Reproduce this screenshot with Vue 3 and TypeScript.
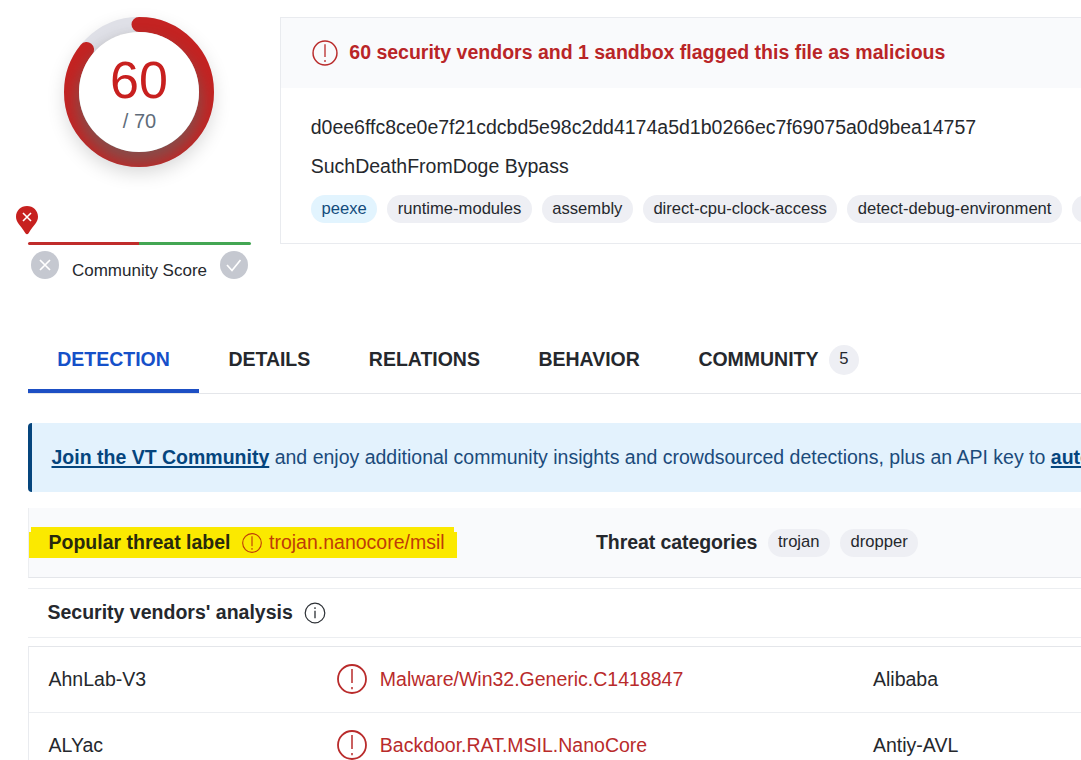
<script setup lang="ts">
interface Finding {
  vendor: string
  result: string
  other: string
}

const fileTags: string[] = [
  'peexe',
  'runtime-modules',
  'assembly',
  'direct-cpu-clock-access',
  'detect-debug-environment',
]

const tabs: string[] = ['DETECTION', 'DETAILS', 'RELATIONS', 'BEHAVIOR', 'COMMUNITY']

const findings: Finding[] = [
  { vendor: 'AhnLab-V3', result: 'Malware/Win32.Generic.C1418847', other: 'Alibaba' },
  { vendor: 'ALYac', result: 'Backdoor.RAT.MSIL.NanoCore', other: 'Antiy-AVL' },
]

const detections = 60
const engines = 70
const circumference = 2 * Math.PI * 67.5
const arc = `${(circumference * detections) / engines} ${circumference}`
</script>

<template>
  <div class="page">
    <div class="summary">
      <aside class="score">
        <svg class="gauge" width="200" height="200" viewBox="0 0 200 200">
          <defs>
            <filter id="outer" x="-30%" y="-30%" width="160%" height="160%">
              <feGaussianBlur stdDeviation="10" />
            </filter>
            <filter id="inner" x="-30%" y="-30%" width="160%" height="160%">
              <feGaussianBlur stdDeviation="8" />
            </filter>
            <clipPath id="disc"><circle cx="100" cy="92" r="75" /></clipPath>
          </defs>
          <circle cx="100" cy="99" r="73" fill="#000" opacity="0.17" filter="url(#outer)" />
          <circle cx="100" cy="92" r="67.5" fill="none" stroke="#dfe0e7" stroke-width="15" />
          <circle
            cx="100"
            cy="92"
            r="67.5"
            fill="none"
            stroke="#c42322"
            stroke-width="15"
            stroke-linecap="round"
            :stroke-dasharray="arc"
            transform="rotate(-90 100 92)"
          />
          <g clip-path="url(#disc)">
            <circle cx="100" cy="102" r="62" fill="#66625f" opacity="0.66" filter="url(#inner)" />
          </g>
          <circle cx="100" cy="92" r="60" fill="#fff" />
          <text class="count" x="100" y="98" text-anchor="middle">{{ detections }}</text>
          <text class="total" x="100.5" y="128" text-anchor="middle">/ {{ engines }}</text>
        </svg>
        <div class="scale">
          <svg class="pin" width="24" height="30" viewBox="0 0 24 30">
            <path d="M12 1C5.800 1 1 5.700 1 11.700C1 17.500 5.200 19.400 10.400 28.200Q12 30.200 13.600 28.200C18.800 19.400 23 17.500 23 11.700C23 5.700 18.200 1 12 1Z" fill="#c7211f" />
            <path d="M8 8l8 8M16 8l-8 8" stroke="#fff" stroke-width="1.600" />
          </svg>
          <div class="bar"></div>
        </div>
        <div class="votes">
          <svg width="28" height="28" viewBox="0 0 28 28">
            <circle cx="14" cy="14" r="14" fill="#c5c8d0" />
            <path d="M9 9l10 10M19 9l-10 10" stroke="#fff" stroke-width="1.700" />
          </svg>
          <span class="label">Community Score</span>
          <svg width="28" height="28" viewBox="0 0 28 28">
            <circle cx="14" cy="14" r="14" fill="#c5c8d0" />
            <path d="M7 14l5 5.500L20.500 9" fill="none" stroke="#fff" stroke-width="1.700" />
          </svg>
        </div>
      </aside>

      <section class="file">
        <header class="verdict">
          <svg width="26" height="26" viewBox="0 0 30 30">
            <circle cx="15" cy="15" r="13.800" fill="none" stroke="#b92b2b" stroke-width="1.700" />
            <path d="M15 5v14.500M15 23v2.300" stroke="#b92b2b" stroke-width="1.500" />
          </svg>
          <span>60 security vendors and 1 sandbox flagged this file as malicious</span>
        </header>
        <div class="hash">d0ee6ffc8ce0e7f21cdcbd5e98c2dd4174a5d1b0266ec7f69075a0d9bea14757</div>
        <div class="name">SuchDeathFromDoge Bypass</div>
        <div class="tags">
          <span v-for="(tag, i) in fileTags" :key="tag" class="tag" :class="{ blue: i === 0 }">{{ tag }}</span>
          <span class="tag more"></span>
        </div>
      </section>
    </div>

    <nav class="tabs">
      <a v-for="(tab, i) in tabs" :key="tab" class="tab" :class="{ active: i === 0 }">
        <span>{{ tab }}</span>
        <span v-if="i === 4" class="badge">5</span>
      </a>
    </nav>

    <div class="join">
      <span><b>Join the VT Community</b> and enjoy additional community insights and crowdsourced detections, plus an API key to <b>automate checks.</b></span>
    </div>

    <section class="threat">
      <div class="highlight">
        <b class="popular">Popular threat label</b>
        <svg width="20" height="20" viewBox="0 0 30 30">
          <circle cx="15" cy="15" r="14" fill="none" stroke="#bf3c08" stroke-width="1.700" />
          <path d="M15 5v15M15 22.500v2.500" stroke="#bf3c08" stroke-width="1.700" />
        </svg>
        <span class="family">trojan.nanocore/msil</span>
      </div>
      <div class="categories">
        <b class="cat-label">Threat categories</b>
        <span class="tag">trojan</span>
        <span class="tag">dropper</span>
      </div>
    </section>

    <div class="analysis">
      <b class="analysis-title">Security vendors' analysis</b>
      <svg width="22" height="22" viewBox="0 0 22 22">
        <circle cx="11" cy="11" r="9.800" fill="none" stroke="#2c3035" stroke-width="1.200" />
        <path d="M11 5.300v1.600M11 8.700v7.500" stroke="#2c3035" stroke-width="1.300" />
      </svg>
    </div>

    <div class="results">
      <div v-for="f in findings" :key="f.vendor" class="row">
        <span class="cell">{{ f.vendor }}</span>
        <span class="result">
          <svg width="30" height="30" viewBox="0 0 30 30">
            <circle cx="15" cy="15" r="14" fill="none" stroke="#b92b2b" stroke-width="1.800" />
            <path d="M15 5v14M15 23v2.200" stroke="#b92b2b" stroke-width="1.500" />
          </svg>
          <span>{{ f.result }}</span>
        </span>
        <span class="cell">{{ f.other }}</span>
      </div>
    </div>
  </div>
</template>

<style>
body {
  margin: 0;
  background: #fff;
  overflow: hidden;
}
</style>

<style scoped>
.page {
  box-sizing: border-box;
  width: 1081px;
  height: 760px;
  overflow: hidden;
  background: #fff;
  color: #25282d;
  font-family: "Liberation Sans", Arial, sans-serif;
  font-size: 19.5px;
  line-height: 24px;
  white-space: nowrap;
}
svg {
  display: block;
  flex: none;
}
.summary {
  display: flex;
  height: 325px;
}
.score {
  box-sizing: border-box;
  width: 280px;
  flex: none;
}
.gauge {
  margin-left: 39px;
}
.count {
  fill: #c8201f;
  font-size: 52px;
}
.total {
  fill: #606c7a;
  font-size: 20px;
}
.scale {
  padding: 5px 29px 0 15px;
}
.bar {
  width: 223px;
  height: 3px;
  margin: 7px 0 0 13px;
  border-radius: 2px;
  background: linear-gradient(90deg, #c02c2b 50%, #43a653 50%);
}
.votes {
  display: flex;
  align-items: flex-start;
  justify-content: space-between;
  width: 217px;
  margin: 6px 0 0 31px;
}
.label {
  margin-top: 8px;
  font-size: 17px;
}
.file {
  box-sizing: border-box;
  width: 900px;
  height: 227px;
  flex: none;
  margin-top: 17px;
  border: 1px solid #e9ebef;
}
.verdict {
  box-sizing: border-box;
  display: flex;
  align-items: flex-start;
  gap: 11.300px;
  height: 70px;
  padding: 22px 0 0 31px;
  background: #f9fafc;
  color: #b92527;
  font-weight: bold;
}
.hash {
  margin: 27px 0 0 29.700px;
}
.name {
  margin: 15px 0 0 29.700px;
}
.tags {
  display: flex;
  gap: 10px;
  margin: 17px 0 0 30px;
}
.tag {
  box-sizing: border-box;
  height: 28px;
  padding: 0 10.500px;
  border-radius: 14px;
  background: #eeeff4;
  font-size: 16.6px;
  line-height: 28px;
}
.tag.blue {
  background: #e2f4fe;
  color: #124b7c;
}
.more {
  width: 60px;
}
.tabs {
  box-sizing: border-box;
  display: flex;
  height: 69px;
  margin-left: 28px;
  border-bottom: 1px solid #e4e6ea;
}
.tab {
  box-sizing: border-box;
  display: flex;
  height: 68px;
  padding: 22px 29.300px 0;
  font-weight: bold;
  letter-spacing: -0.020px;
}
.active {
  color: #1650c9;
  border-bottom: 4px solid #1d4fc4;
}
.badge {
  width: 30px;
  height: 30px;
  margin: -2px 0 0 10.500px;
  border-radius: 50%;
  background: #eeeff4;
  font-size: 16.6px;
  font-weight: normal;
  line-height: 28px;
  text-align: center;
}
.join {
  box-sizing: border-box;
  height: 69px;
  margin: 29px 0 0 28px;
  padding: 22px 0 0 19.500px;
  overflow: hidden;
  border-left: 4px solid #05457d;
  border-radius: 4px 0 0 4px;
  background: #e3f2fd;
  color: #1b4b7b;
}
.join b {
  color: #05457d;
  text-decoration: underline;
  text-decoration-thickness: 1.500px;
  text-underline-offset: 2px;
  text-decoration-skip-ink: none;
}
.threat {
  box-sizing: border-box;
  display: flex;
  height: 70px;
  margin: 16px 0 0 28px;
  padding-top: 19px;
  border-left: 1px solid #eceef1;
  border-bottom: 1px solid #e4e6ea;
  background: #f9fafc;
}
.highlight {
  box-sizing: border-box;
  display: flex;
  align-items: center;
  width: 428px;
  height: 31px;
  padding-left: 19.500px;
  background: #fbe900;
  clip-path: polygon(2px 0, 425px 0, 425px 5px, 100% 5px, 100% 100%, 0 100%, 0 5px, 2px 5px);
}
.popular {
  width: 193.500px;
  padding-bottom: 2px;
  color: #28290d;
}
.family {
  padding-bottom: 2px;
  margin-left: 7px;
  color: #bf3c08;
}
.categories {
  display: flex;
  margin-left: 139px;
  padding-top: 2px;
}
.cat-label {
  width: 171.500px;
  padding-top: 1px;
  letter-spacing: -0.080px;
}
.categories .tag {
  margin-right: 10px;
  line-height: 26px;
}
.analysis {
  box-sizing: border-box;
  display: flex;
  align-items: center;
  height: 50px;
  margin: 10px 0 0 28px;
  padding-left: 19.500px;
  border: solid #eceef1;
  border-width: 1px 0;
}
.analysis-title {
  width: 256px;
  padding-bottom: 2px;
}
.results {
  margin: 8px 0 0 28px;
  border-left: 1px solid #e9ebef;
  border-top: 1px solid #e4e6ea;
}
.row {
  box-sizing: border-box;
  display: grid;
  grid-template-columns: 288.300px 536.200px 1fr;
  align-items: center;
  height: 66px;
  padding-left: 19.500px;
  border-bottom: 1px solid #eceef1;
}
.cell {
  padding-bottom: 2px;
}
.result {
  display: flex;
  align-items: center;
  gap: 13px;
  padding-bottom: 1px;
  color: #b92b2b;
}
</style>
